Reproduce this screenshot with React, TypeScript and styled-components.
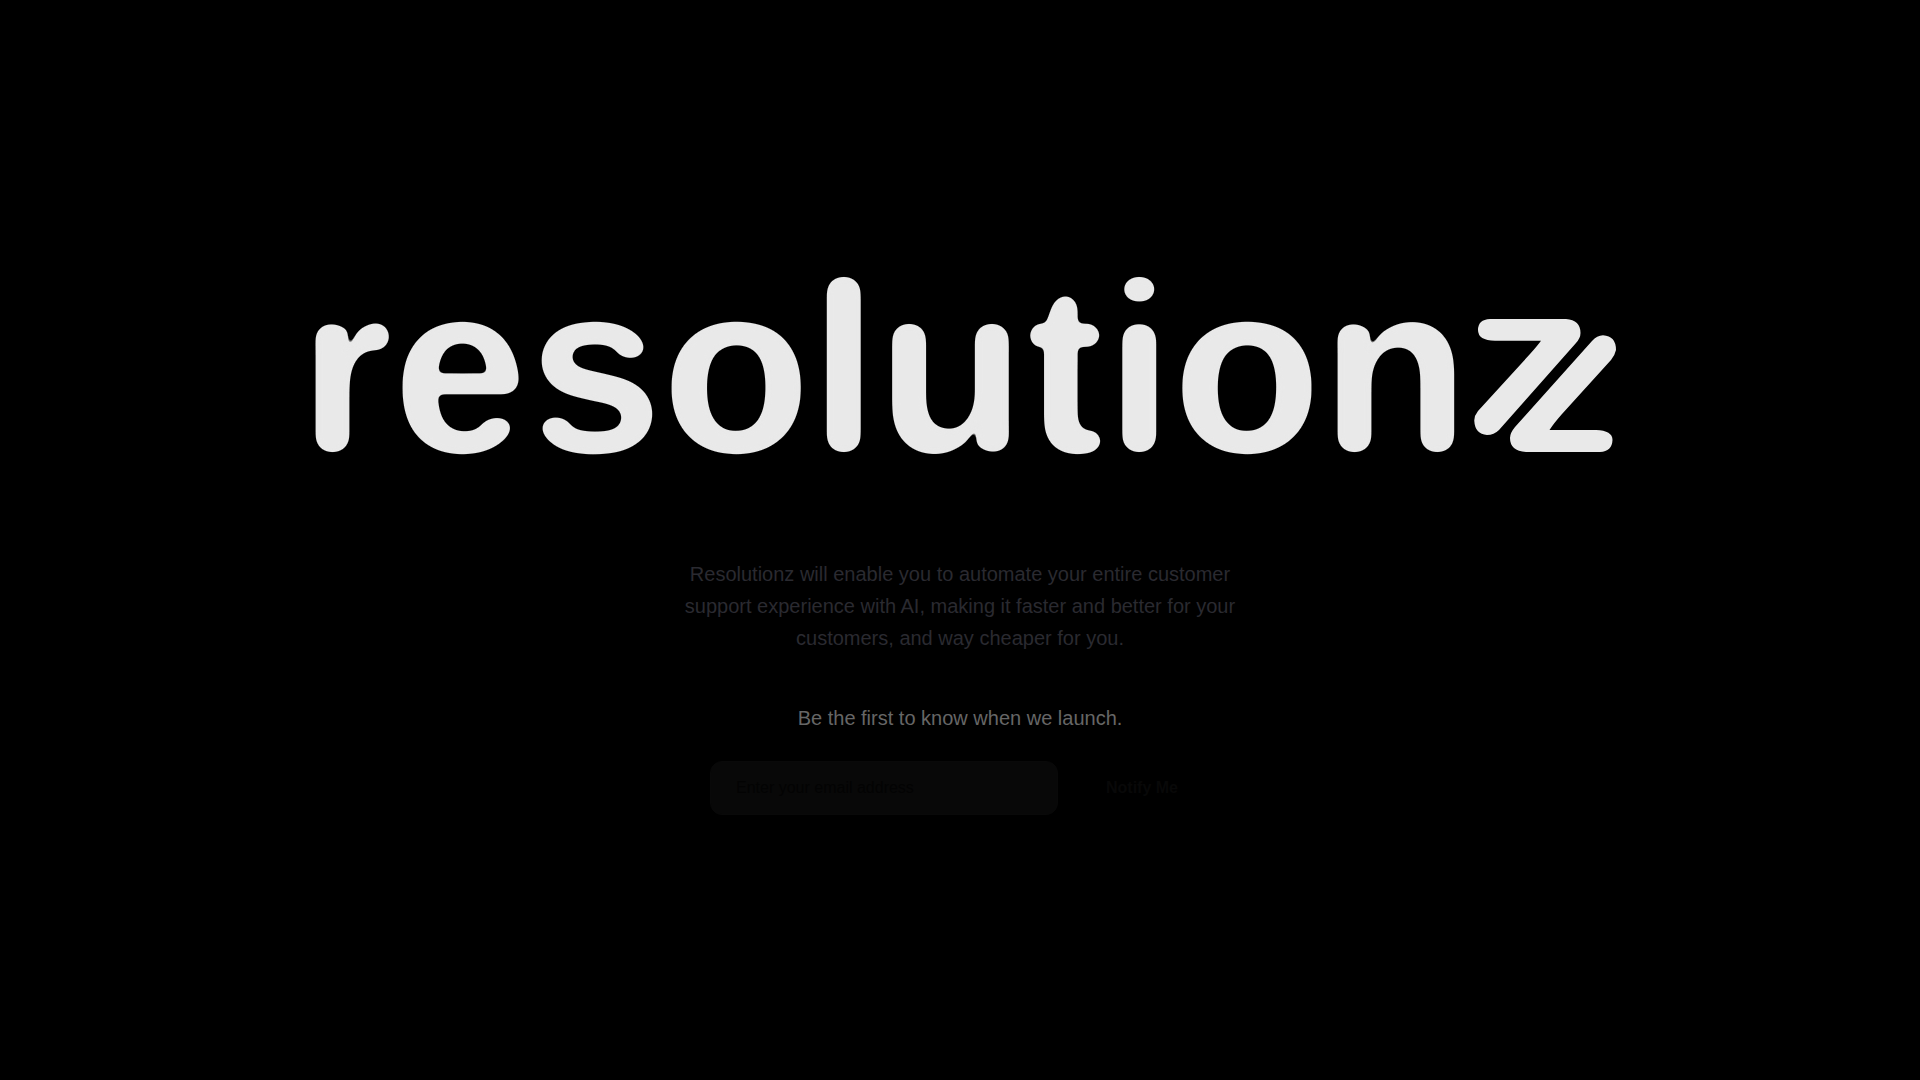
import React from "react";
import styled, { createGlobalStyle } from "styled-components";

const GlobalStyle = createGlobalStyle`
  *, *::before, *::after { box-sizing: border-box; }
  body {
    margin: 0;
    background: #000;
    font-family: "Liberation Sans", Arial, sans-serif;
  }
`;

const Page = styled.main`
  min-height: 100vh;
  display: flex;
  flex-direction: column;
  align-items: center;
  justify-content: center;
`;

const Heading = styled.h1`
  width: 80%;
  margin: 0 0 93px;
`;

const Logo = styled.svg`
  display: block;
  width: 100%;
  height: auto;
  overflow: visible;
  fill: #e9e9e9;
`;

const Wordmark = styled.text`
  font-family: "Liberation Sans", Arial, sans-serif;
  font-size: 242px;
  font-weight: 700;
`;

const Intro = styled.p`
  max-width: 576px;
  margin: 0 0 48px;
  color: #2a2a30;
  font-size: 20px;
  line-height: 32px;
  text-align: center;
`;

const Invite = styled.p`
  margin: 0 0 27px;
  color: #666;
  font-size: 20px;
  line-height: 32px;
  text-align: center;
`;

const Form = styled.form`
  display: flex;
  gap: 16px;
  width: 100%;
  max-width: 500px;
`;

const EmailInput = styled.input`
  flex: 1;
  min-width: 0;
  height: 54px;
  padding: 0 25px;
  border: 1px solid #090909;
  border-radius: 12px;
  outline: none;
  background: #080808;
  color: #666;
  font: 400 16px/24px "Liberation Sans", Arial, sans-serif;

  &::placeholder {
    color: #030303;
    opacity: 1;
  }
`;

const NotifyButton = styled.button`
  padding: 0 32px;
  border: 0;
  border-radius: 12px;
  background: #000;
  color: #080808;
  font: 700 16px/24px "Liberation Sans", Arial, sans-serif;
  white-space: nowrap;
  cursor: pointer;
`;

export default function App() {
  return (
    <>
      <GlobalStyle />
      <Page>
        <Heading>
          <Logo viewBox="192 265 1536 200" role="img" aria-label="resolutionz">
            <defs>
              {/* Rounds the outer corners of the letters, keeps the inner ones, then smooths the edge. */}
              <filter
                id="rounded"
                filterUnits="userSpaceOnUse"
                x="280"
                y="240"
                width="1200"
                height="250"
                colorInterpolationFilters="sRGB"
              >
                <feGaussianBlur in="SourceGraphic" stdDeviation="9" />
                <feComponentTransfer result="soft">
                  <feFuncA type="linear" slope="26" intercept="-12" />
                </feComponentTransfer>
                <feComposite in="SourceGraphic" in2="soft" operator="in" />
                <feGaussianBlur stdDeviation="3" />
                <feComponentTransfer>
                  <feFuncA type="linear" slope="8" intercept="-3.2" />
                </feComponentTransfer>
              </filter>
            </defs>
            <Wordmark x="299" y="452" filter="url(#rounded)">
              resolution
            </Wordmark>
            <path d="M1490 319H1566Q1580.5 320 1580.5 333Q1580.5 338 1576 343L1499 430Q1494 435 1487 435Q1475 434 1474.3 421Q1474 416 1478 411L1530 354Q1538 345 1541 340.7H1495Q1478 340.5 1478 330Q1478 319.5 1490 319Z" />
            <path d="M1603 335.3Q1616 336 1616 350Q1615 355 1611 360L1562 414Q1554 423 1549.5 430H1596Q1612.5 430.5 1612.5 440Q1612 451.5 1600 452H1526Q1510 451 1510 438Q1510 433 1515 427L1592 341Q1597 335.5 1603 335.3Z" />
          </Logo>
        </Heading>
        <Intro>
          Resolutionz will enable you to automate your entire customer support
          experience with AI, making it faster and better for your customers,
          and way cheaper for you.
        </Intro>
        <Invite>Be the first to know when we launch.</Invite>
        <Form onSubmit={(event) => event.preventDefault()}>
          <EmailInput
            type="email"
            aria-label="Email address"
            placeholder="Enter your email address"
          />
          <NotifyButton type="submit">Notify Me</NotifyButton>
        </Form>
      </Page>
    </>
  );
}
